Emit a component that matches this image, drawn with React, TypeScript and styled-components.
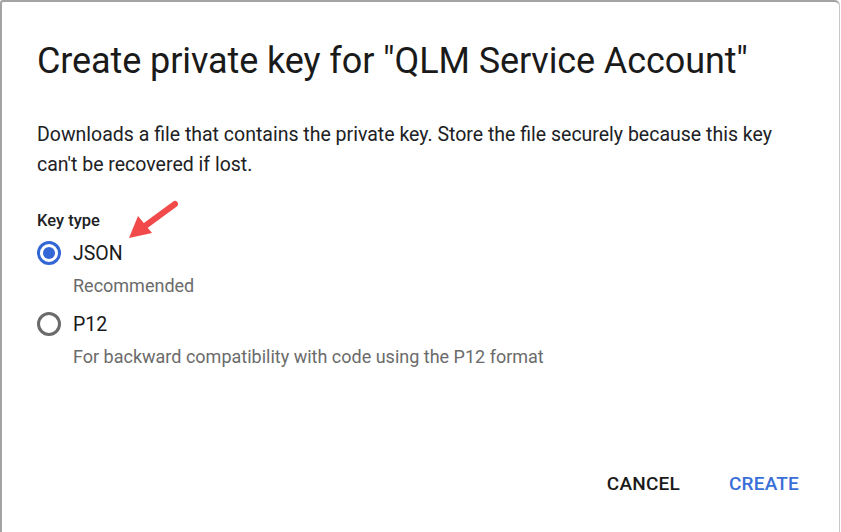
import styled, { createGlobalStyle } from 'styled-components';

const GlobalStyle = createGlobalStyle`
  html, body {
    margin: 0;
    padding: 0;
    background: #ffffff;
  }
  body {
    font-family: Roboto, "Liberation Sans", Arial, sans-serif;
    color: #202124;
  }
`;

const Dialog = styled.div`
  position: relative;
  box-sizing: border-box;
  width: 839px;
  height: 532px;
  border-top: 2px solid #a3a3a3;
  border-left: 2px solid #a3a3a3;
  border-top-right-radius: 5px;
  border-top-left-radius: 3px;
  box-shadow: 1px 0 0 #c8c8c8;
  display: flex;
  flex-direction: column;
  padding: 37px 0 0 35px;
  background: #fff;
`;

const Title = styled.h1`
  margin: 0;
  font-size: 36px;
  font-weight: 400;
  line-height: 44px;
  color: #1a1a1a;
  letter-spacing: -0.1px;
`;

const Description = styled.p`
  margin: 37px 0 0;
  width: 770px;
  font-size: 19.5px;
  line-height: 30px;
  color: #202124;
`;

const FieldLabel = styled.div`
  margin-top: 31px;
  font-size: 16.5px;
  font-weight: 500;
  line-height: 20px;
  color: #202124;
`;

const OptionList = styled.div`
  display: flex;
  flex-direction: column;
  margin-top: 9px;
  gap: 15px;
`;

const Option = styled.label`
  display: flex;
  flex-direction: column;
`;

const OptionRow = styled.div`
  display: flex;
  align-items: center;
  gap: 12px;
  height: 26px;
`;

const Radio = styled.span<{ checked: boolean }>`
  box-sizing: border-box;
  width: 24px;
  height: 24px;
  border-radius: 50%;
  border: 3px solid ${(p) => (p.checked ? '#3367d6' : '#6b6b6b')};
  display: flex;
  align-items: center;
  justify-content: center;
  &::after {
    content: '';
    width: 12px;
    height: 12px;
    border-radius: 50%;
    background: ${(p) => (p.checked ? '#3367d6' : 'transparent')};
  }
`;

const OptionName = styled.span`
  font-size: 19.5px;
  color: #1a1a1a;
`;

const OptionHint = styled.span`
  margin: 10px 0 0 36px;
  font-size: 18px;
  line-height: 20px;
  color: #6b6b6b;
`;

const Actions = styled.div`
  margin-top: auto;
  display: flex;
  justify-content: flex-end;
  gap: 49px;
  padding: 0 40px 37px 0;
`;

const ActionButton = styled.button<{ primary?: boolean }>`
  border: none;
  background: none;
  padding: 0;
  font-family: inherit;
  font-size: 19px;
  line-height: 22px;
  font-weight: 500;
  letter-spacing: 0.2px;
  color: ${(p) => (p.primary ? '#3a6fd8' : '#1a1a1a')};
  cursor: pointer;
`;

const Arrow = styled.svg`
  position: absolute;
  left: 121px;
  top: 193px;
`;

const options = [
  { name: 'JSON', hint: 'Recommended', checked: true },
  { name: 'P12', hint: 'For backward compatibility with code using the P12 format', checked: false },
];

export default function App() {
  return (
    <>
      <GlobalStyle />
      <Dialog>
        <Title>Create private key for "QLM Service Account"</Title>
        <Description>
          Downloads a file that contains the private key. Store the file securely because this key can't be
          recovered if lost.
        </Description>
        <FieldLabel>Key type</FieldLabel>
        <OptionList>
          {options.map((o) => (
            <Option key={o.name}>
              <OptionRow>
                <Radio checked={o.checked} />
                <OptionName>{o.name}</OptionName>
              </OptionRow>
              <OptionHint>{o.hint}</OptionHint>
            </Option>
          ))}
        </OptionList>
        <Actions>
          <ActionButton>CANCEL</ActionButton>
          <ActionButton primary>CREATE</ActionButton>
        </Actions>
        <Arrow width="60" height="50" viewBox="0 0 60 50">
          <line x1="52" y1="9" x2="22" y2="31" stroke="#f24a4a" strokeWidth="6" strokeLinecap="round" />
          <polygon points="6,43 15,21 29,38" fill="#f24a4a" />
        </Arrow>
      </Dialog>
    </>
  );
}
